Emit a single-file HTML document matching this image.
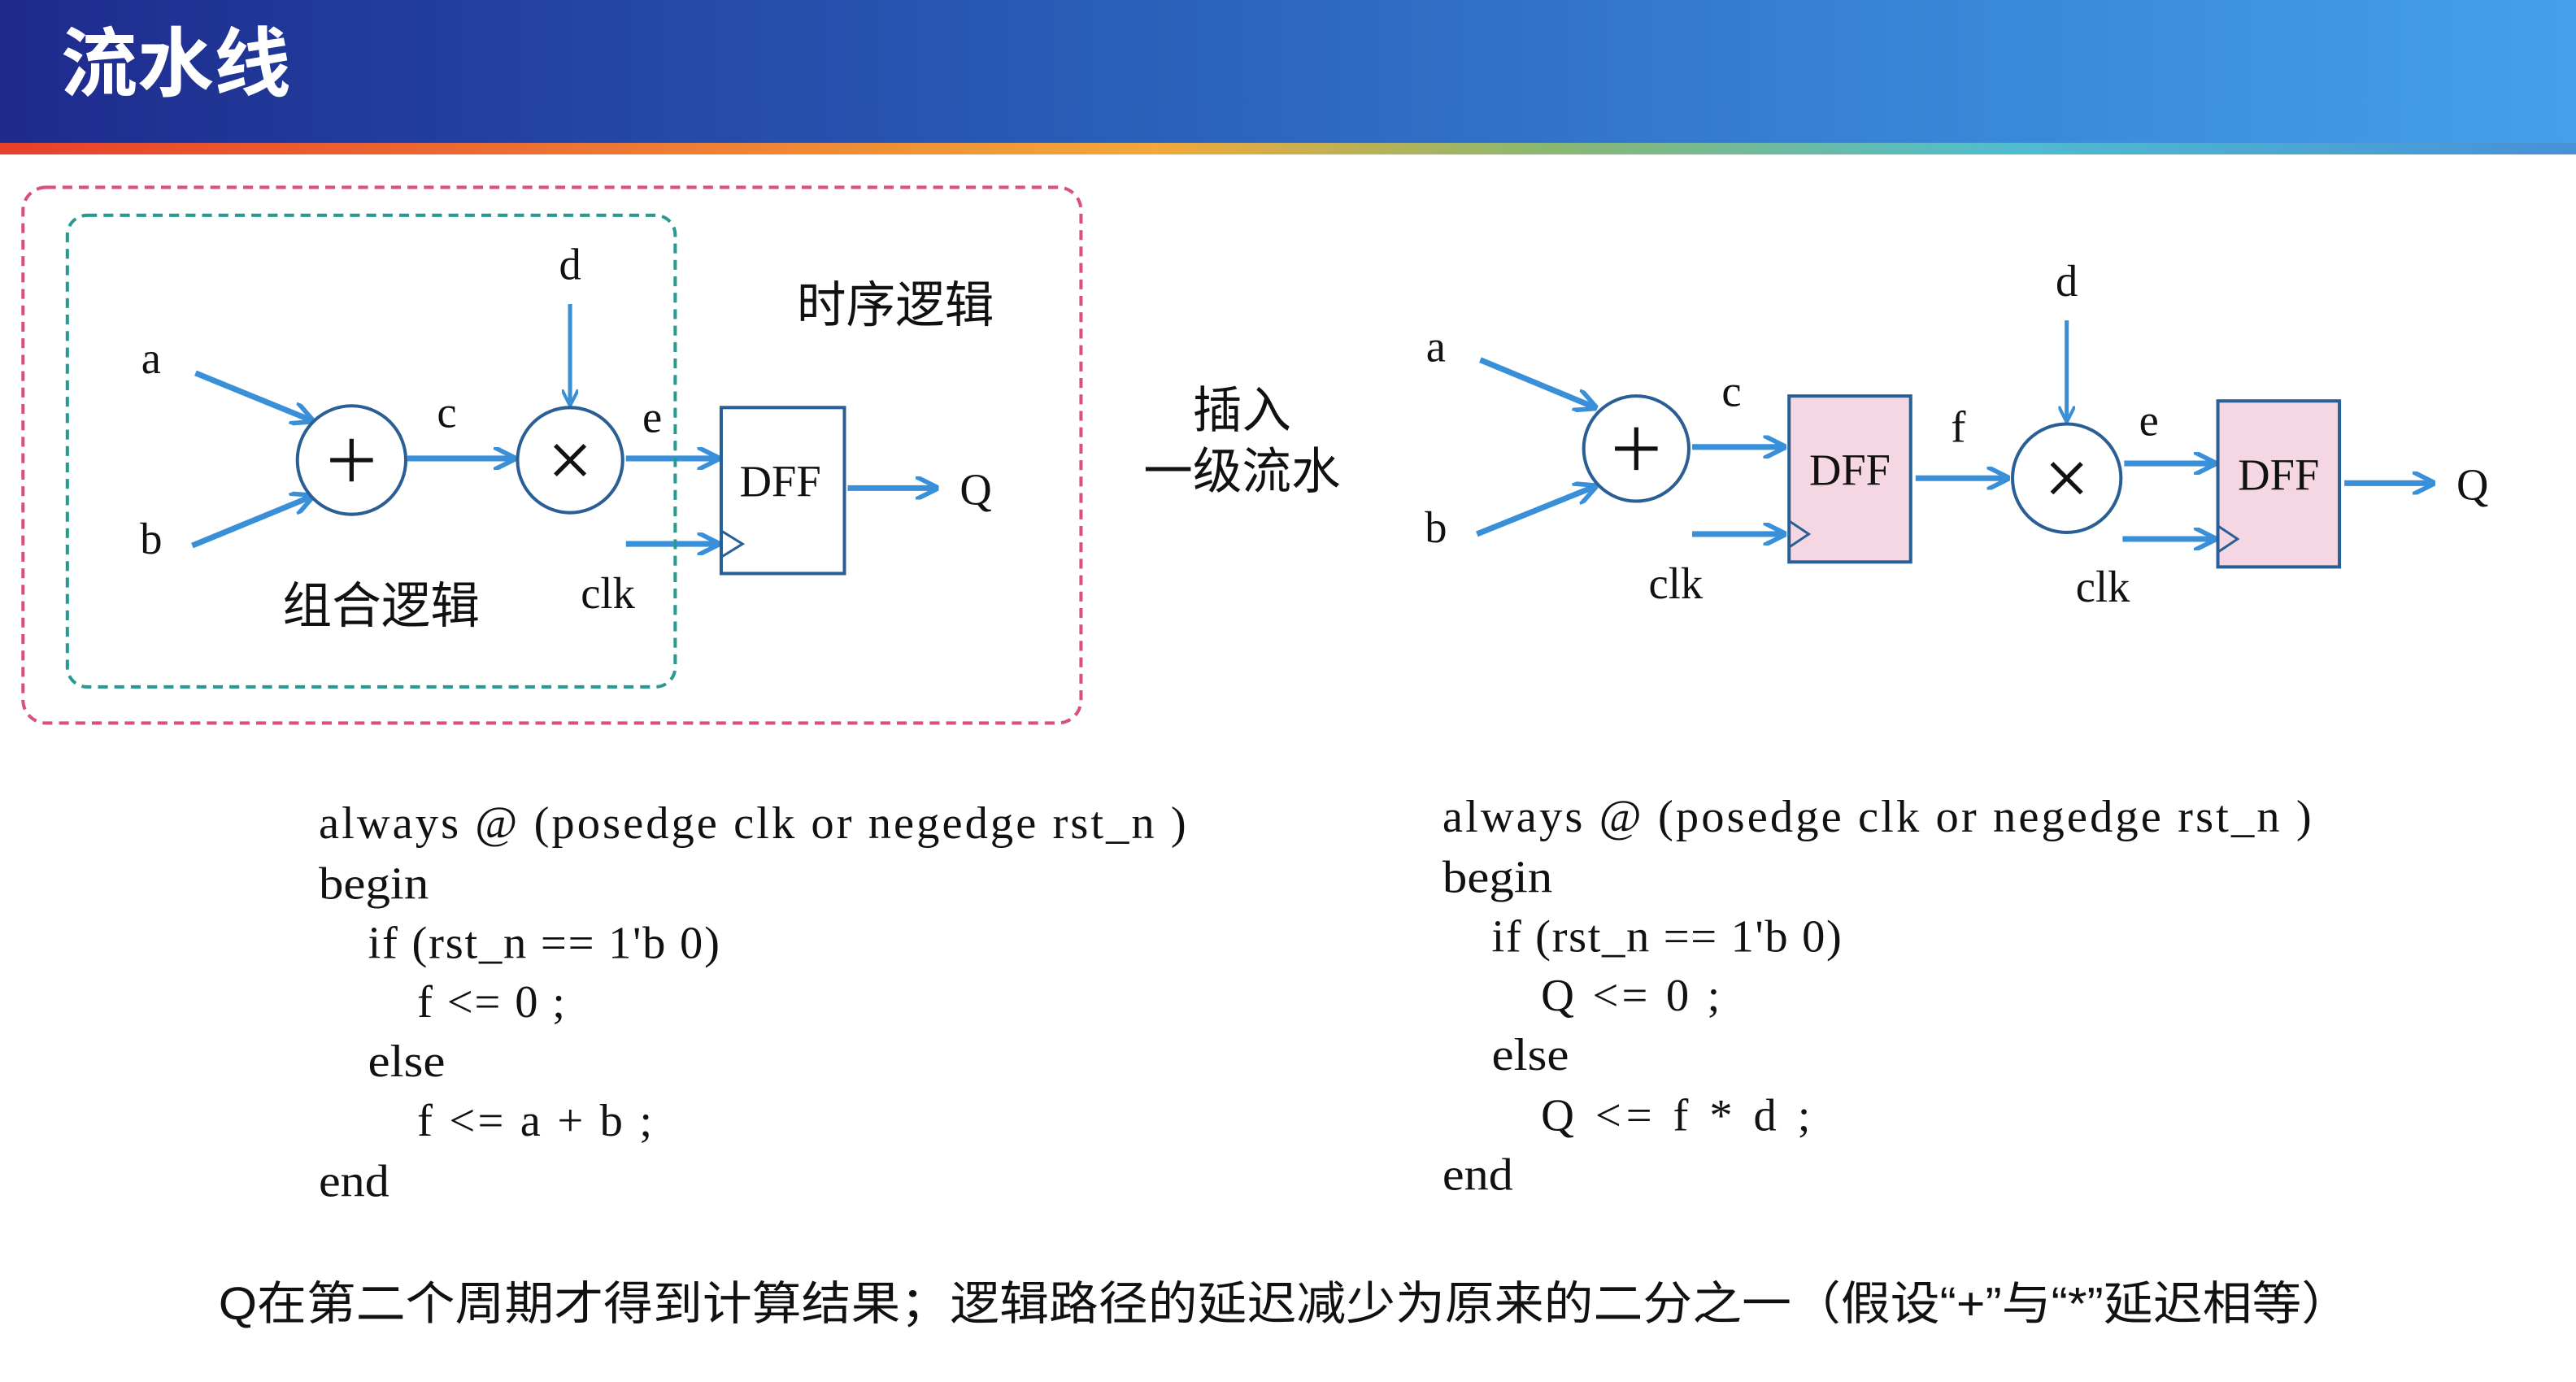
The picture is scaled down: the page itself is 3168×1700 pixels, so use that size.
<!DOCTYPE html>
<html><head><meta charset="utf-8"><style>
html,body{margin:0;padding:0;background:#fff;}
svg{display:block;}
.s{font-family:"Liberation Serif","Noto Serif CJK SC",serif;fill:#111;}
.c{font-family:"Liberation Sans","Noto Sans CJK SC",sans-serif;fill:#111;}
.p{white-space:pre;}
</style></head><body>
<svg width="3168" height="1700" viewBox="0 0 1568 841" preserveAspectRatio="none" xmlns="http://www.w3.org/2000/svg">
<defs>
<linearGradient id="hg" x1="0" x2="1" y1="0" y2="0">
<stop offset="0" stop-color="#1e2a8c"/><stop offset="0.35" stop-color="#2754b0"/><stop offset="0.7" stop-color="#3680d3"/><stop offset="1" stop-color="#46a0ea"/></linearGradient>
<linearGradient id="rb" x1="0" x2="1" y1="0" y2="0">
<stop offset="0" stop-color="#e8402a"/><stop offset="0.45" stop-color="#f2a83a"/><stop offset="0.6" stop-color="#8ab870"/><stop offset="0.78" stop-color="#50bcd0"/><stop offset="1" stop-color="#4890d8"/></linearGradient>
<marker id="ar" viewBox="0 0 10 10" refX="9" refY="5" markerWidth="4" markerHeight="4" orient="auto"><path d="M0,0 L10,5 L0,10" fill="none" stroke="#3a8fd9" stroke-width="2"/></marker>
</defs>
<rect x="0" y="0" width="1568" height="88" fill="url(#hg)"/>
<rect x="0" y="87" width="1568" height="7" fill="url(#rb)"/>
<text x="37" y="55" font-family="'Noto Sans CJK SC',sans-serif" font-weight="bold" font-size="46" fill="#fff" textLength="140" lengthAdjust="spacingAndGlyphs">流水线</text>

<g stroke="#3a8fd9" stroke-width="3.5" marker-end="url(#ar)" fill="none">
<line x1="119" y1="227" x2="190" y2="256"/><line x1="117" y1="332" x2="190" y2="302"/>
<line x1="248" y1="279" x2="313" y2="279"/><line x1="347" y1="185" x2="347" y2="246" stroke-width="2.5"/>
<line x1="381" y1="279" x2="437" y2="279"/><line x1="381" y1="331" x2="437" y2="331"/>
<line x1="516" y1="297" x2="570" y2="297"/>
<line x1="901" y1="219" x2="971" y2="248"/><line x1="899" y1="325" x2="971" y2="296"/>
<line x1="1030" y1="272" x2="1086" y2="272"/><line x1="1030" y1="325" x2="1086" y2="325"/>
<line x1="1166" y1="291" x2="1222" y2="291"/><line x1="1258" y1="195" x2="1258" y2="256" stroke-width="2.5"/>
<line x1="1293" y1="282" x2="1348" y2="282"/><line x1="1292" y1="328" x2="1348" y2="328"/>
<line x1="1427" y1="294" x2="1481" y2="294"/>
</g>
<rect x="14" y="114" width="644" height="326" rx="14" fill="none" stroke="#d9507a" stroke-width="2" stroke-dasharray="6,4"/>
<rect x="41" y="131" width="370" height="287" rx="12" fill="none" stroke="#2a9a90" stroke-width="2" stroke-dasharray="6,4"/>
<g fill="#fff" stroke="#2a5f95" stroke-width="2">
<circle cx="214" cy="280" r="33"/><circle cx="347" cy="280" r="32"/>
<rect x="439" y="248" width="75" height="101"/>
<circle cx="996" cy="273" r="32"/><circle cx="1258" cy="291" r="33"/>
<rect x="1089" y="241" width="74" height="101" fill="#f5d7e4"/>
<rect x="1350" y="244" width="74" height="101" fill="#f5d7e4"/>
</g>
<g fill="none" stroke="#2a5f95" stroke-width="1.5">
<path d="M439,323 L452,331 L439,339"/><path d="M1089,317 L1101,325 L1089,333"/><path d="M1350,320 L1362,328 L1350,336"/>
</g>
<g stroke="#111" stroke-width="2.6">
<line x1="201" y1="280" x2="227" y2="280"/><line x1="214" y1="267" x2="214" y2="293"/>
<line x1="338" y1="271" x2="356" y2="289"/><line x1="356" y1="271" x2="338" y2="289"/>
<line x1="983" y1="273" x2="1009" y2="273"/><line x1="996" y1="260" x2="996" y2="286"/>
<line x1="1249" y1="282" x2="1267" y2="300"/><line x1="1267" y1="282" x2="1249" y2="300"/>
</g>
<g class="s" font-size="27" text-anchor="middle">
<text x="92" y="227">a</text><text x="92" y="337">b</text><text x="272" y="260">c</text><text x="347" y="170">d</text><text x="397" y="263">e</text>
<text x="475" y="302">DFF</text><text x="594" y="307">Q</text><text x="370" y="370">clk</text>
<text x="874" y="220">a</text><text x="874" y="330">b</text><text x="1054" y="247">c</text><text x="1258" y="180">d</text><text x="1192" y="269">f</text><text x="1308" y="265">e</text>
<text x="1126" y="295">DFF</text><text x="1387" y="298">DFF</text><text x="1505" y="304">Q</text><text x="1020" y="364">clk</text><text x="1280" y="366">clk</text>
</g>
<g class="c" font-size="30" text-anchor="middle">
<text x="232" y="379">组合逻辑</text><text x="545" y="196">时序逻辑</text>
<text x="756" y="260">插入</text><text x="756" y="297">一级流水</text>
</g>
<g class="s p" font-size="28">
<text x="194" y="510" textLength="528" lengthAdjust="spacing">always  @ (posedge clk  or  negedge rst_n )</text>
<text x="194" y="547" textLength="67" lengthAdjust="spacingAndGlyphs">begin</text>
<text x="224" y="583" textLength="214" lengthAdjust="spacing">if (rst_n == 1'b 0)</text>
<text x="254" y="619" textLength="90" lengthAdjust="spacing">f &lt;= 0 ;</text>
<text x="224" y="655" textLength="47" lengthAdjust="spacingAndGlyphs">else</text>
<text x="254" y="691" textLength="143" lengthAdjust="spacing">f  &lt;= a + b ;</text>
<text x="194" y="728" textLength="43" lengthAdjust="spacingAndGlyphs">end</text>
<text x="878" y="506" textLength="529" lengthAdjust="spacing">always  @ (posedge clk  or  negedge rst_n )</text>
<text x="878" y="543" textLength="67" lengthAdjust="spacingAndGlyphs">begin</text>
<text x="908" y="579" textLength="213" lengthAdjust="spacing">if (rst_n == 1'b 0)</text>
<text x="938" y="615" textLength="109" lengthAdjust="spacing">Q  &lt;= 0 ;</text>
<text x="908" y="651" textLength="47" lengthAdjust="spacingAndGlyphs">else</text>
<text x="938" y="688" textLength="164" lengthAdjust="spacing">Q  &lt;= f * d   ;</text>
<text x="878" y="724" textLength="43" lengthAdjust="spacingAndGlyphs">end</text>
</g>
<text x="133" y="803" class="c" font-size="28" textLength="1298" lengthAdjust="spacingAndGlyphs">Q在第二个周期才得到计算结果；逻辑路径的延迟减少为原来的二分之一（假设“+”与“*”延迟相等）</text>
</svg>
</body></html>
